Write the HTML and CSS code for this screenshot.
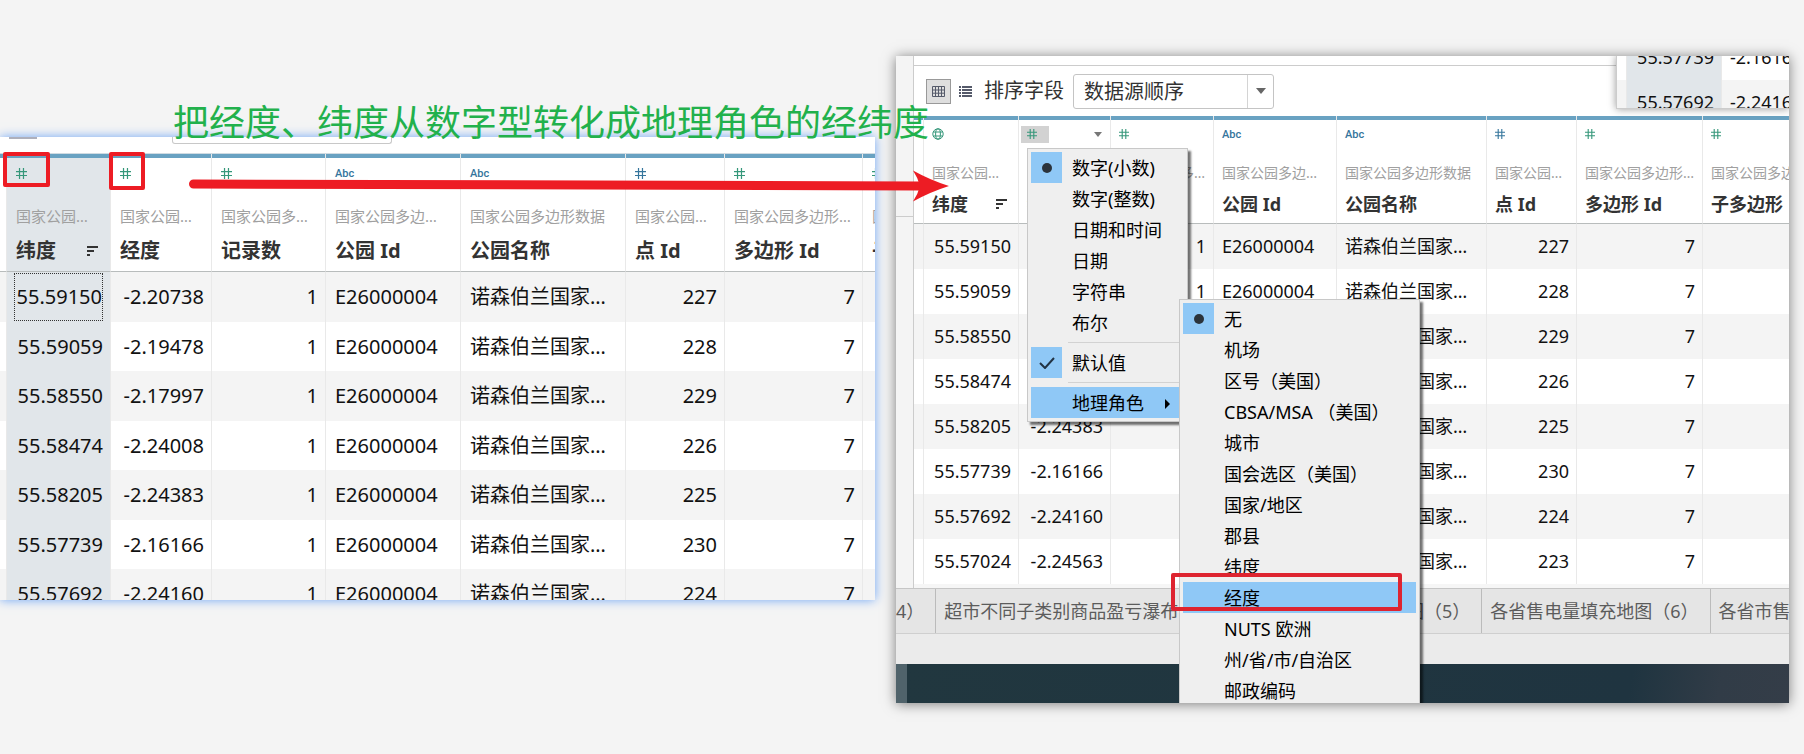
FILE: index.html
```html
<!DOCTYPE html>
<html lang="zh-CN">
<head>
<meta charset="utf-8">
<title>地理角色转换</title>
<link rel="stylesheet" href="styles.css">
</head>
<body>
<svg width="0" height="0" class="defs" aria-hidden="true">
  <symbol id="hash" viewBox="0 0 10 10"><path d="M3.2 0v10M6.8 0v10M0 3.2h10M0 6.8h10" fill="none" stroke="currentColor" stroke-width="1.1"/></symbol>
  <symbol id="globe" viewBox="0 0 12 12"><g fill="none" stroke="currentColor"><circle cx="6" cy="6" r="5.2"/><ellipse cx="6" cy="6" rx="2.4" ry="5.2"/><path d="M1.3 4h9.4M1.3 8h9.4"/></g></symbol>
  <symbol id="sort" viewBox="0 0 12 12"><path d="M1 2h11M1 6h7M1 10h3" fill="none" stroke="currentColor" stroke-width="2"/></symbol>
</svg>
<main class="stage">

  <section class="panel before" aria-label="转换前">
    <div class="cut-bar"><span class="cut-button"></span><span class="cut-select"></span></div>
    <table class="grid">
      <colgroup><col class="a0"><col class="a1"><col class="a2"><col class="a3"><col class="a4"><col class="a5"><col class="a6"><col class="a7"><col></colgroup>
      <thead>
        <tr>
          <th></th>
          <th class="sel"><div class="type"><button class="kind" aria-label="数字"><svg><use href="#hash"/></svg></button></div><div class="src">国家公园…</div><div class="name">纬度<svg class="sort"><use href="#sort"/></svg></div></th>
          <th><div class="type"><button class="kind" aria-label="数字"><svg><use href="#hash"/></svg></button></div><div class="src">国家公园…</div><div class="name">经度</div></th>
          <th><div class="type"><button class="kind" aria-label="数字"><svg><use href="#hash"/></svg></button></div><div class="src">国家公园多…</div><div class="name">记录数</div></th>
          <th><div class="type"><button class="kind dim">Abc</button></div><div class="src">国家公园多边…</div><div class="name">公园 Id</div></th>
          <th><div class="type"><button class="kind dim">Abc</button></div><div class="src">国家公园多边形数据</div><div class="name">公园名称</div></th>
          <th><div class="type"><button class="kind dim" aria-label="数字"><svg><use href="#hash"/></svg></button></div><div class="src">国家公园…</div><div class="name">点 Id</div></th>
          <th><div class="type"><button class="kind" aria-label="数字"><svg><use href="#hash"/></svg></button></div><div class="src">国家公园多边形…</div><div class="name">多边形 Id</div></th>
          <th><div class="type"><button class="kind" aria-label="数字"><svg><use href="#hash"/></svg></button></div><div class="src">国</div><div class="name">子</div></th>
        </tr>
      </thead>
      <tbody>
        <tr><td></td><td class="n sel"><span class="focus">55.59150</span></td><td class="n">-2.20738</td><td class="n">1</td><td>E26000004</td><td>诺森伯兰国家…</td><td class="n">227</td><td class="n">7</td><td></td></tr>
        <tr><td></td><td class="n sel">55.59059</td><td class="n">-2.19478</td><td class="n">1</td><td>E26000004</td><td>诺森伯兰国家…</td><td class="n">228</td><td class="n">7</td><td></td></tr>
        <tr><td></td><td class="n sel">55.58550</td><td class="n">-2.17997</td><td class="n">1</td><td>E26000004</td><td>诺森伯兰国家…</td><td class="n">229</td><td class="n">7</td><td></td></tr>
        <tr><td></td><td class="n sel">55.58474</td><td class="n">-2.24008</td><td class="n">1</td><td>E26000004</td><td>诺森伯兰国家…</td><td class="n">226</td><td class="n">7</td><td></td></tr>
        <tr><td></td><td class="n sel">55.58205</td><td class="n">-2.24383</td><td class="n">1</td><td>E26000004</td><td>诺森伯兰国家…</td><td class="n">225</td><td class="n">7</td><td></td></tr>
        <tr><td></td><td class="n sel">55.57739</td><td class="n">-2.16166</td><td class="n">1</td><td>E26000004</td><td>诺森伯兰国家…</td><td class="n">230</td><td class="n">7</td><td></td></tr>
        <tr><td></td><td class="n sel">55.57692</td><td class="n">-2.24160</td><td class="n">1</td><td>E26000004</td><td>诺森伯兰国家…</td><td class="n">224</td><td class="n">7</td><td></td></tr>
      </tbody>
    </table>
  </section>

  <section class="panel after" aria-label="转换后">
    <div class="workspace">
      <div class="gutter"><div class="gutter-top"></div></div>
      <div class="view">
        <div class="topline"></div>
        <div class="toolbar">
          <button class="mode active" aria-label="网格"><svg viewBox="0 0 13 11"><path d="M.5 .5h12v10H.5zM.5 4h12M.5 7.200h12M3.500.5v10M6.500.5v10M9.500.5v10" fill="none" stroke="currentColor"/></svg></button>
          <button class="mode" aria-label="列表"><svg viewBox="0 0 13 11"><path d="M0 1h2M3 1h10M0 4h2M3 4h10M0 7h2M3 7h10M0 10h2M3 10h10" fill="none" stroke="currentColor" stroke-width="2"/></svg></button>
          <label for="order">排序字段</label>
          <div class="select"><select id="order"><option>数据源顺序</option></select><span class="arrow"><svg viewBox="0 0 10 6"><path d="M0 0h10L5 6z" fill="currentColor"/></svg></span></div>
        </div>
        <div class="rows">
        <table class="grid">
          <colgroup><col class="b0"><col class="b1"><col class="b2"><col class="b3"><col class="b4"><col class="b5"><col class="b6"><col class="b7"><col></colgroup>
          <thead>
            <tr>
              <th></th>
              <th><div class="type"><button class="kind geo" aria-label="地理"><svg><use href="#globe"/></svg></button></div><div class="src">国家公园…</div><div class="name">纬度<svg class="sort"><use href="#sort"/></svg></div></th>
              <th><div class="type"><button class="kind open" aria-label="数字"><svg><use href="#hash"/></svg></button><svg class="caret" viewBox="0 0 8 5"><path d="M0 0h8L4 5z" fill="currentColor"/></svg></div><div class="src">国家公园…</div><div class="name">经度</div></th>
              <th><div class="type"><button class="kind" aria-label="数字"><svg><use href="#hash"/></svg></button></div><div class="src wide">国家公园多…</div><div class="name">记录数</div></th>
              <th><div class="type"><button class="kind dim">Abc</button></div><div class="src">国家公园多边…</div><div class="name">公园 Id</div></th>
              <th><div class="type"><button class="kind dim">Abc</button></div><div class="src">国家公园多边形数据</div><div class="name">公园名称</div></th>
              <th><div class="type"><button class="kind dim" aria-label="数字"><svg><use href="#hash"/></svg></button></div><div class="src">国家公园…</div><div class="name">点 Id</div></th>
              <th><div class="type"><button class="kind" aria-label="数字"><svg><use href="#hash"/></svg></button></div><div class="src">国家公园多边形…</div><div class="name">多边形 Id</div></th>
              <th><div class="type"><button class="kind" aria-label="数字"><svg><use href="#hash"/></svg></button></div><div class="src">国家公园多边</div><div class="name">子多边形</div></th>
            </tr>
          </thead>
          <tbody>
            <tr><td></td><td class="n">55.59150</td><td class="n">-2.20738</td><td class="n">1</td><td>E26000004</td><td>诺森伯兰国家…</td><td class="n">227</td><td class="n">7</td><td></td></tr>
            <tr><td></td><td class="n">55.59059</td><td class="n">-2.19478</td><td class="n">1</td><td>E26000004</td><td>诺森伯兰国家…</td><td class="n">228</td><td class="n">7</td><td></td></tr>
            <tr><td></td><td class="n">55.58550</td><td class="n">-2.17997</td><td class="n">1</td><td>E26000004</td><td>诺森伯兰国家…</td><td class="n">229</td><td class="n">7</td><td></td></tr>
            <tr><td></td><td class="n">55.58474</td><td class="n">-2.24008</td><td class="n">1</td><td>E26000004</td><td>诺森伯兰国家…</td><td class="n">226</td><td class="n">7</td><td></td></tr>
            <tr><td></td><td class="n">55.58205</td><td class="n">-2.24383</td><td class="n">1</td><td>E26000004</td><td>诺森伯兰国家…</td><td class="n">225</td><td class="n">7</td><td></td></tr>
            <tr><td></td><td class="n">55.57739</td><td class="n">-2.16166</td><td class="n">1</td><td>E26000004</td><td>诺森伯兰国家…</td><td class="n">230</td><td class="n">7</td><td></td></tr>
            <tr><td></td><td class="n">55.57692</td><td class="n">-2.24160</td><td class="n">1</td><td>E26000004</td><td>诺森伯兰国家…</td><td class="n">224</td><td class="n">7</td><td></td></tr>
            <tr><td></td><td class="n">55.57024</td><td class="n">-2.24563</td><td class="n">1</td><td>E26000004</td><td>诺森伯兰国家…</td><td class="n">223</td><td class="n">7</td><td></td></tr>
          </tbody>
        </table>
        </div>
      </div>
    </div>
    <nav class="tabs">
      <a class="first" href="#t4">4）</a>
      <a class="mid" href="#t5">超市不同子类别商品盈亏瀑布图</a>
      <a class="far" href="#t6">图（5）</a>
      <a href="#t7">各省售电量填充地图（6）</a>
      <a href="#t8">各省市售电量</a>
    </nav>
    <div class="status"></div>
    <div class="taskbar"><span></span></div>

    <div class="inset">
      <table class="grid">
        <colgroup><col class="c0"><col class="c1"><col></colgroup>
        <tbody>
          <tr class="light"><td></td><td class="n sel">55.57739</td><td>-2.16166</td></tr>
          <tr class="shade"><td></td><td class="n sel">55.57692</td><td>-2.24160</td></tr>
        </tbody>
      </table>
    </div>

    <div class="menu types" role="menu">
      <button role="menuitem"><span class="mark"><i class="dot"></i></span>数字(小数)</button>
      <button role="menuitem"><span class="mark-gap"></span>数字(整数)</button>
      <button role="menuitem"><span class="mark-gap"></span>日期和时间</button>
      <button role="menuitem"><span class="mark-gap"></span>日期</button>
      <button role="menuitem"><span class="mark-gap"></span>字符串</button>
      <button role="menuitem"><span class="mark-gap"></span>布尔</button>
      <hr>
      <button role="menuitem"><span class="mark"><svg viewBox="0 0 16 12"><path d="M1 6l5 5L15 1" fill="none" stroke="currentColor" stroke-width="2"/></svg></span>默认值</button>
      <hr>
      <button role="menuitem" class="hot"><span class="mark-gap"></span>地理角色<svg class="more" viewBox="0 0 5 10"><path d="M0 0l5 5-5 5z" fill="currentColor"/></svg></button>
    </div>

    <div class="menu roles" role="menu">
      <button role="menuitem"><span class="mark"><i class="dot"></i></span>无</button>
      <button role="menuitem"><span class="mark-gap"></span>机场</button>
      <button role="menuitem"><span class="mark-gap"></span>区号（美国）</button>
      <button role="menuitem"><span class="mark-gap"></span>CBSA/MSA （美国）</button>
      <button role="menuitem"><span class="mark-gap"></span>城市</button>
      <button role="menuitem"><span class="mark-gap"></span>国会选区（美国）</button>
      <button role="menuitem"><span class="mark-gap"></span>国家/地区</button>
      <button role="menuitem"><span class="mark-gap"></span>郡县</button>
      <button role="menuitem"><span class="mark-gap"></span>纬度</button>
      <button role="menuitem" class="hot"><span class="mark-gap"></span>经度</button>
      <button role="menuitem"><span class="mark-gap"></span>NUTS 欧洲</button>
      <button role="menuitem"><span class="mark-gap"></span>州/省/市/自治区</button>
      <button role="menuitem"><span class="mark-gap"></span>邮政编码</button>
    </div>
  </section>

  <p class="caption">把经度、纬度从数字型转化成地理角色的经纬度</p>
  <svg class="marks" width="1420" height="640" aria-hidden="true">
    <g fill="none" stroke="#ed1c24" stroke-width="4" stroke-linejoin="round">
      <rect x="5" y="154" width="43" height="31"/>
      <rect x="111" y="154" width="32" height="34"/>
      <rect x="1173" y="575" width="227" height="34" stroke="#de2430"/>
    </g>
    <path d="M193.500 184L922 186" stroke="#ed1c24" stroke-width="9" stroke-linecap="round"/>
    <path d="M913 170.500Q930 180 949 186Q930 192 913 201.500Q918 194 920 186Q918 178 913 170.500z" fill="#ed1c24"/>
  </svg>
</main>
</body>
</html>
```

FILE: styles.css
```css
* { box-sizing: border-box; }

body {
  margin: 0;
  background: #f4f4f4;
  color: #111;
  font-family: "Noto Sans", "Noto Sans CJK SC", sans-serif;
  overflow: hidden;
}

.defs { position: absolute; }

button, select { font: inherit; color: inherit; }

.stage {
  position: relative;
  display: grid;
  grid-template-columns: 875fr 893fr;
  column-gap: 21px;
  height: 100vh;
  padding-right: 15px;
}

.panel { background: #fff; overflow: hidden; }

.before {
  margin: 137px 0 154px;
  font-size: 20px;
  box-shadow: 0 0 10px #6ea5f5;
}

.after {
  position: relative;
  display: flex;
  flex-direction: column;
  margin: 56px 0 51px;
  font-size: 18px;
  box-shadow: 0 1px 12px rgba(0, 0, 0, .5);
}

/* clipped toolbar above the first table */
.cut-bar {
  display: flex;
  align-items: flex-start;
  gap: 135px;
  height: 17px;
  padding-left: 9px;
  border-bottom: 1px solid #d0dbe2;
}
.cut-button { width: 28px; height: 2px; background: #aeb0bc; }
.cut-select {
  width: 220px;
  height: 7px;
  border: 1px solid #c8c8c8;
  border-top: 0;
  border-radius: 0 0 3px 3px;
}

/* data grid */
.grid {
  width: 100%;
  table-layout: fixed;
  border-collapse: separate;
  border-spacing: 0;
}
.grid th, .grid td {
  overflow: hidden;
  white-space: nowrap;
  text-align: left;
  border-right: 1px solid #e9e9e9;
}
.grid th:last-child, .grid td:last-child { border-right: 0; }
.grid th {
  padding: 0 8px;
  vertical-align: top;
  font-weight: normal;
  border-bottom: 1px solid #b8bcbc;
  background: linear-gradient(#69a2c2, #69a2c2) top / 100% 4px no-repeat;
}
.grid td { padding: 0 8px 2px; line-height: 24px; }
.grid .n { text-align: right; padding-left: 0; padding-right: 7px; }
.grid tbody tr:nth-child(odd) { background: #f4f4f4; }
.grid th.sel { background-color: #e1e6ea; }
.grid td.sel { background: #e1e6ea; }
.focus {
  display: block;
  margin-left: 7px;
  border: 1px dotted #333;
  line-height: 46px;
}

.type { display: flex; align-items: center; justify-content: space-between; }
.kind {
  display: flex;
  align-items: center;
  min-width: 28px;
  height: 17px;
  margin-left: -6px;
  padding: 0 6px;
  border: 0;
  background: none;
  color: #35977a;
  font-size: 11px;
  font-family: Roboto, sans-serif;
  font-weight: 500;
}
.kind svg { width: 10px; height: 10px; }
.kind.geo svg { width: 12px; height: 12px; }
.kind.dim { color: #35759c; }
.kind.open { background: #d2d2d2; }
.caret { width: 8px; height: 5px; color: #777; }
.src { line-height: 20px; color: #a0a0a0; }
.name {
  display: flex;
  align-items: center;
  justify-content: space-between;
  line-height: 24px;
  white-space: pre;
  font-weight: bold;
  color: #333;
}
.sort { width: 12px; height: 12px; margin-right: 3px; color: #333; }

.before th, .before td { padding: 0 9px; }
.before th { height: 118px; padding-top: 4px; }
.before .type { height: 30px; }
.before .kind svg { width: 11px; height: 11px; }
.before .src { margin-top: 18px; font-size: 15px; }
.before .name { margin-top: 13px; }
.before tbody tr { height: 49px; }
.before tbody tr:nth-child(odd) { height: 50px; }
.a0 { width: 7px; }
.a1 { width: 104px; }
.a2 { width: 101px; }
.a3 { width: 114px; }
.a4 { width: 135px; }
.a5 { width: 165px; }
.a6 { width: 99px; }
.a7 { width: 138px; }

.after th { height: 108px; padding-top: 4px; }
.after .type { height: 28px; }
.after .src { margin-top: 15px; font-size: 14px; }
.after .wide { text-align: right; }
.after .name { margin-top: 9px; }
.after td { height: 45px; }
.b0 { width: 10px; }
.b1 { width: 95px; }
.b2 { width: 92px; }
.b3 { width: 103px; }
.b4 { width: 123px; }
.b5 { width: 150px; }
.b6 { width: 90px; }
.b7 { width: 126px; }

/* second window */
.workspace { display: flex; flex: 1; min-height: 0; }
.gutter { width: 18px; background: #f4f4f4; border-right: 1px solid #ccc; }
.gutter-top { height: 161px; border-bottom: 1px solid #ccc; }
.view { display: flex; flex: 1; flex-direction: column; min-width: 0; }
.topline { height: 10px; flex: none; border-bottom: 1px solid #ccc; }
.toolbar {
  display: flex;
  align-items: center;
  flex: none;
  height: 50px;
  padding-left: 12px;
  font-size: 20px;
  color: #333;
}
.mode {
  display: flex;
  align-items: center;
  justify-content: center;
  width: 25px;
  height: 25px;
  padding: 0;
  border: 0;
  background: none;
  color: #555a6a;
}
.mode svg { width: 13px; height: 11px; }
.mode.active { border: 1px solid #999; background: #dedede; }
.mode + .mode { margin-left: 2px; }
.toolbar label { margin: 0 9px 0 6px; line-height: 24px; }
.select { position: relative; width: 201px; height: 35px; }
.select select {
  width: 100%;
  height: 100%;
  padding: 0 36px 0 10px;
  appearance: none;
  border: 1px solid #c4c4c4;
  border-radius: 3px;
  background: #fff;
}
.arrow {
  position: absolute;
  top: 1px;
  right: 1px;
  bottom: 1px;
  display: flex;
  align-items: center;
  justify-content: center;
  width: 26px;
  border-left: 1px solid #d4d4d4;
  color: #666;
  pointer-events: none;
}
.arrow svg { width: 10px; height: 6px; }
.rows { flex: 1; min-height: 0; overflow: hidden; background: #f6f6f6; }
.rows thead tr, .rows tbody tr { background: #fff; }

.tabs {
  display: flex;
  flex: none;
  height: 46px;
  overflow: hidden;
  border-top: 1px solid #c6c6c6;
  border-bottom: 1px solid #cfcfcf;
  background: #e5e5e5;
}
.tabs a {
  flex: none;
  padding: 0 11px 0 8px;
  border-right: 1px solid #bbb;
  line-height: 44px;
  white-space: nowrap;
  color: #5c5c5c;
  text-decoration: none;
}
.tabs .first { padding-left: 0; }
.tabs .far { width: 274px; text-align: right; }
.status { flex: none; height: 30px; background: #ebebeb; }
.taskbar {
  display: flex;
  flex: none;
  height: 39px;
  background: linear-gradient(100deg, #21373f 0%, #1f3440 82%, #313c47 92%, #343d48 100%);
}
.taskbar span { width: 11px; background: #50636b; }

/* corner of another window */
.inset {
  position: absolute;
  top: 0;
  right: 0;
  width: 173px;
  height: 53px;
  overflow: hidden;
  background: #fff;
  border: 1px solid #ccc;
  border-width: 0 0 1px 1px;
  box-shadow: 0 0 8px rgba(0, 0, 0, .4);
}
.inset .grid { margin-top: -21px; }
.inset .grid .light { background: #fff; }
.inset .grid .shade { background: #f4f4f4; }
.c0 { width: 10px; }
.c1 { width: 95px; }

/* menus */
.menu {
  position: absolute;
  padding: 3px;
  border: 1px solid #c8c8c8;
  background: #efefef;
  color: #000;
  box-shadow: 3px 3px 2px rgba(0, 0, 0, .55);
}
.types { top: 92px; left: 131px; width: 161px; }
.roles { top: 243px; left: 283px; width: 241px; }
.menu button {
  display: flex;
  align-items: center;
  width: 100%;
  height: 31px;
  padding: 2px 0 0;
  border: 0;
  background: none;
  line-height: 29px;
  white-space: nowrap;
  text-align: left;
}
.menu .hot { background: #8fc8f6; }
.mark, .mark-gap { flex: none; width: 31px; height: 31px; margin: -2px 10px 0 0; }
.mark {
  display: flex;
  align-items: center;
  justify-content: center;
  background: #8fc8f6;
  color: #234;
}
.mark svg { width: 16px; height: 12px; }
.dot { width: 10px; height: 10px; border-radius: 50%; background: #2b333b; }
.menu hr {
  height: 1px;
  margin: 4px 0 4px 37px;
  border: 0;
  background: #d2d2d2;
}
.more { width: 5px; height: 10px; margin-left: auto; margin-right: 14px; }

/* annotations drawn over both windows */
.caption {
  position: absolute;
  top: 101px;
  left: 173px;
  margin: 0;
  font-size: 36px;
  line-height: 44px;
  white-space: nowrap;
  color: #22b14c;
}
.marks { position: absolute; top: 0; left: 0; pointer-events: none; }
```
